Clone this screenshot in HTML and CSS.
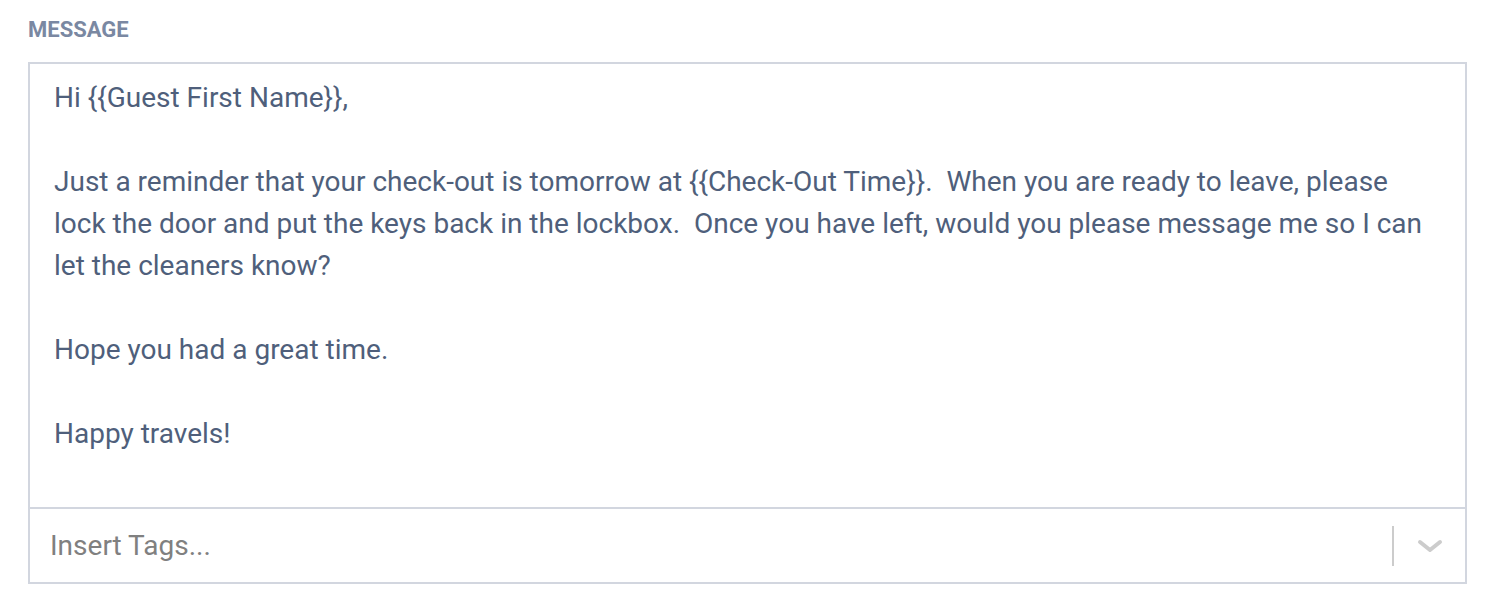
FILE: index.html
```html
<!DOCTYPE html>
<html lang="en">
<head>
<meta charset="utf-8">
<title>Message</title>
<link rel="stylesheet" href="styles.css">
</head>
<body>
<div class="field">
  <label class="field-label" for="msg">MESSAGE</label>
  <div class="editor">
    <textarea id="msg" class="editor-text" readonly>Hi {{Guest First Name}},

Just a reminder that your check-out is tomorrow at {{Check-Out Time}}.  When you are ready to leave, please lock the door and put the keys back in the lockbox.  Once you have left, would you please message me so I can let the cleaners know?

Hope you had a great time.

Happy travels!</textarea>
    <div class="tag-select">
      <span class="tag-placeholder">Insert Tags...</span>
      <span class="tag-indicators">
        <span class="tag-sep"></span>
        <svg class="tag-chevron" width="26" height="14" viewBox="0 0 26 14" aria-hidden="true">
          <path d="M3 3 L13 11 L23 3" fill="none" stroke="#cccccc" stroke-width="4" stroke-linecap="round" stroke-linejoin="round"/>
        </svg>
      </span>
    </div>
  </div>
</div>
</body>
</html>
```

FILE: styles.css
```css
html, body {
  margin: 0;
  padding: 0;
  background: #ffffff;
}
body {
  font-family: Roboto, "Liberation Sans", sans-serif;
}
.field {
  padding: 16px 41px 0 28px;
  display: flex;
  flex-direction: column;
}
.field-label {
  font-size: 22px;
  font-weight: 700;
  color: #7a88a2;
  line-height: 28px;
  margin-bottom: 18px;
}
.editor {
  border: 2px solid #d2d6df;
  display: flex;
  flex-direction: column;
}
.editor-text {
  display: block;
  box-sizing: border-box;
  width: 100%;
  height: 445px;
  margin: 0;
  border: none;
  border-bottom: 2px solid #d2d6df;
  padding: 13px 26px 0 24px;
  resize: none;
  overflow: hidden;
  outline: none;
  font-family: Roboto, "Liberation Sans", sans-serif;
  font-size: 28px;
  line-height: 42px;
  color: #4f5f7b;
  background: #ffffff;
}
.tag-select {
  height: 73px;
  display: flex;
  align-items: center;
  justify-content: space-between;
  padding: 0 22px 0 20px;
}
.tag-placeholder {
  font-size: 28px;
  color: #808080;
}
.tag-indicators {
  display: flex;
  align-items: center;
  gap: 23px;
}
.tag-sep {
  width: 2px;
  height: 40px;
  background: #cccccc;
}
.tag-chevron {
  display: block;
}
```
